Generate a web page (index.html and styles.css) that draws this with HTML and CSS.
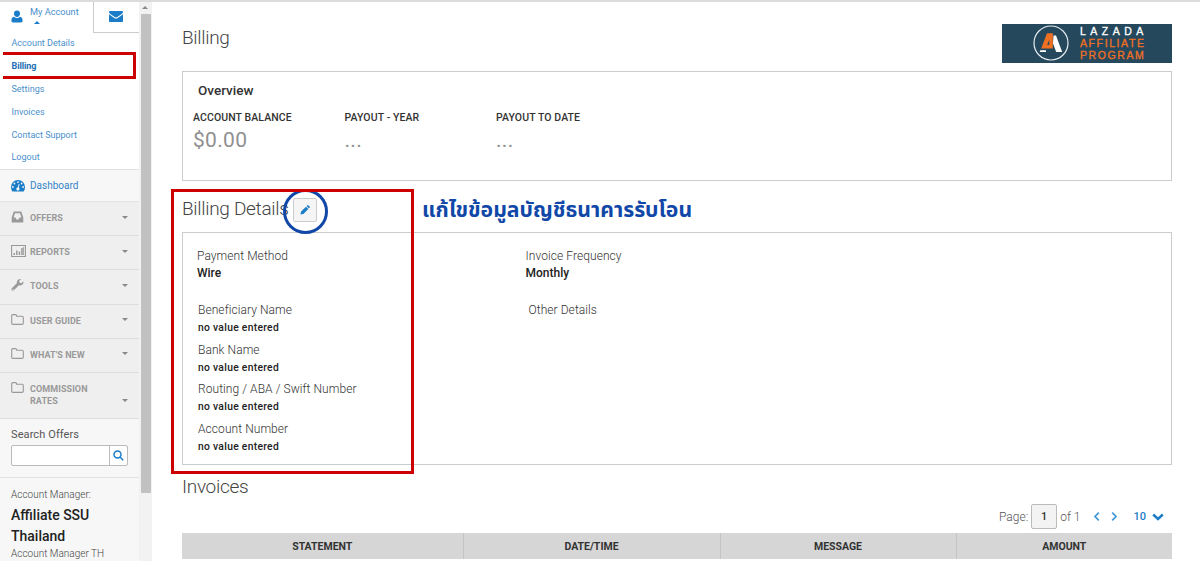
FILE: index.html
```html
<!DOCTYPE html>
<html lang="en">
<head>
    <meta charset="UTF-8">
    <meta name="viewport" content="width=device-width, initial-scale=1.0">
    <title>Billing</title>
    <link rel="stylesheet" href="styles.css">
</head>
<body>
    <div class="page">
        <div class="sidebar">
            <div class="account-tabs">
                <div class="account-tab">
                    <svg class="icon-user" viewBox="0 0 12 13"><path d="M6 0.5a3 3.3 0 0 1 3 3.3C9 5.700 7.700 7 6 7S3 5.700 3 3.800A3 3.300 0 0 1 6 .5zM3 6.800c.8.8 1.800 1.200 3 1.200s2.200-.4 3-1.200c1.800.3 2.600 2 2.600 4 0 1-.6 1.700-1.600 1.700H2c-1 0-1.600-.7-1.600-1.700 0-2 .8-3.700 2.600-4z"/></svg>
                    <div class="account-name">My Account<span class="caret-up"></span></div>
                </div>
                <div class="mail-tab">
                    <svg class="icon-mail" viewBox="0 0 14 11"><path d="M1 0h12c.6 0 1 .4 1 1 0 .8-.6 1.500-1.300 2L8.300 6c-.9.6-1.700.6-2.600 0L1.300 3C.6 2.500 0 1.800 0 1c0-.6.400-1 1-1zM0 3.300l5.200 3.600c1.300.9 2.300.9 3.600 0L14 3.300V10c0 .6-.4 1-1 1H1c-.6 0-1-.4-1-1z"/></svg>
                </div>
            </div>
            <div class="account-links">
                <a>Account Details</a>
                <a class="active">Billing</a>
                <a>Settings</a>
                <a>Invoices</a>
                <a>Contact Support</a>
                <a>Logout</a>
                <div class="mark-billing"></div>
            </div>
            <div class="dashboard">
                <svg class="icon-dash" viewBox="0 0 14 12"><path fill-rule="evenodd" d="M7 0a7 7 0 0 1 7 7c0 1.500-.4 3-1.100 4.200-.2.300-.4.400-.7.400H1.800c-.3 0-.5-.1-.7-.4A8 8 0 0 1 0 7a7 7 0 0 1 7-7zM7 1.200a.9.9 0 1 0 0 1.800.9.9 0 0 0 0-1.800zM3.400 2.600a.9.9 0 1 0 0 1.800.9.9 0 0 0 0-1.800zM10.600 2.600a.9.9 0 1 0 0 1.800.9.9 0 0 0 0-1.800zM1.900 6.100a.9.9 0 1 0 0 1.800.9.9 0 0 0 0-1.800zM12.100 6.100a.9.9 0 1 0 0 1.800.9.9 0 0 0 0-1.800zM7.700 4l-.9 3.500a1.500 1.500 0 1 0 1 .3l.8-3.500z"/></svg>
                <a>Dashboard</a>
            </div>
            <div class="nav">
                <div class="nav-item">
                    <svg class="nav-icon" viewBox="0 0 15 14"><path fill-rule="evenodd" d="M2.700 1.500h7.600L12.300 7.500v5H.7v-5zM4 3.200L2.600 7.600h1.900l.9 1.800h2.200l.9-1.800h1.900L9 3.200z"/></svg>
                    <span>OFFERS</span><i class="caret"></i>
                </div>
                <div class="nav-item">
                    <svg class="nav-icon" viewBox="0 0 15 14"><path class="line" d="M.6 1.500h13.800v11H.6z"/><path d="M2.500 9h1.500v2H2.500zM5.100 6.500h1.500V11H5.100zM7.700 7.500h1.500V11H7.700zM10.200 4h1.500v7h-1.500zM12.200 3h.8v8h-.8z"/></svg>
                    <span>REPORTS</span><i class="caret"></i>
                </div>
                <div class="nav-item">
                    <svg class="nav-icon" viewBox="0 0 15 14"><path d="M12.300 3.200L10.300 5.200 8.600 4.700 8.200 3 10.200 1C8.200.5 5.800 1.900 5.800 4.400v.9L.8 10.200c-1.400 1.500.6 3.500 2.100 2.100l5-5c3 .7 5.200-1.600 4.400-4.100zM2 11.900a.6.600 0 1 1 0-1.200.6.600 0 0 1 0 1.200z"/></svg>
                    <span>TOOLS</span><i class="caret"></i>
                </div>
                <div class="nav-item">
                    <svg class="nav-icon" viewBox="0 0 15 14"><path class="line" d="M.7 2.800c0-.8.400-1.200 1.200-1.200h2.500c.8 0 1.200.4 1.200 1.200v.4h5.500c.8 0 1.200.4 1.200 1.200v5.800c0 .8-.4 1.200-1.200 1.200H1.900c-.8 0-1.200-.4-1.200-1.200z"/></svg>
                    <span>USER GUIDE</span><i class="caret"></i>
                </div>
                <div class="nav-item">
                    <svg class="nav-icon" viewBox="0 0 15 14"><path class="line" d="M.7 2.800c0-.8.400-1.200 1.200-1.200h2.500c.8 0 1.200.4 1.200 1.200v.4h5.500c.8 0 1.200.4 1.200 1.200v5.800c0 .8-.4 1.200-1.200 1.200H1.900c-.8 0-1.200-.4-1.200-1.200z"/></svg>
                    <span>WHAT'S NEW</span><i class="caret"></i>
                </div>
                <div class="nav-item tall">
                    <svg class="nav-icon" viewBox="0 0 15 14"><path class="line" d="M.7 2.800c0-.8.400-1.200 1.200-1.200h2.500c.8 0 1.200.4 1.200 1.200v.4h5.500c.8 0 1.200.4 1.200 1.200v5.800c0 .8-.4 1.200-1.200 1.200H1.900c-.8 0-1.200-.4-1.200-1.200z"/></svg>
                    <span>COMMISSION<br>RATES</span><i class="caret"></i>
                </div>
            </div>
            <div class="search">
                <label for="searchInput">Search Offers</label>
                <div class="search-box">
                    <input type="text" id="searchInput">
                    <button><svg viewBox="0 0 11 11"><circle cx="4.500" cy="4.500" r="3.500"/><path d="M7.200 7.200l3 3"/></svg></button>
                </div>
            </div>
            <div class="manager">
                <p>Account Manager:</p>
                <h3>Affiliate SSU<br>Thailand</h3>
                <p>Account Manager TH</p>
            </div>
        </div>
        <div class="scrollbar">
            <span class="scroll-up"></span>
            <div class="scroll-thumb"></div>
        </div>
        <div class="main">
            <div class="main-head">
                <h1>Billing</h1>
                <div class="logo">
                    <svg viewBox="0 0 38 38"><circle cx="19" cy="19" r="17"/><path class="white" d="M21.500 11.500h2.500l6.200 16.500h-6L21 19.500zM8.300 26.200h5.700v1.800H7.700z"/><path class="orange" d="M15 9.300h5.800V24.500H9.200zM17.300 15.500L15.200 21h2.100z" fill-rule="evenodd"/></svg>
                    <div class="logo-text">
                        <span class="logo-name">LAZADA</span>
                        <span class="logo-affiliate">AFFILIATE</span>
                        <span class="logo-program">PROGRAM</span>
                    </div>
                </div>
            </div>
            <div class="panel overview">
                <h2>Overview</h2>
                <div class="stats">
                    <div><h4>ACCOUNT BALANCE</h4><p>$0.00</p></div>
                    <div><h4>PAYOUT - YEAR</h4><p>...</p></div>
                    <div><h4>PAYOUT TO DATE</h4><p>...</p></div>
                </div>
            </div>
            <div class="details-head">
                <h1>Billing Details</h1>
                <button class="edit-button"><svg viewBox="0 0 10 10"><path d="M.5 9.500l.6-2.900L6 1.700l2.300 2.300-4.900 4.900zM6.600 1.100l.7-.7c.4-.4.8-.4 1.200 0l1.100 1.100c.4.4.4.800 0 1.200l-.7.7z"/></svg></button>
                <span class="edit-note" lang="th">แก้ไขข้อมูลบัญชีธนาคารรับโอน</span>
                <div class="mark-edit"></div>
                <div class="mark-details"></div>
            </div>
            <div class="panel details">
                <div class="method">
                    <label>Payment Method</label>
                    <strong>Wire</strong>
                </div>
                <div class="method">
                    <label>Invoice Frequency</label>
                    <strong>Monthly</strong>
                </div>
                <div class="fields">
                    <label>Beneficiary Name</label>
                    <strong>no value entered</strong>
                    <label>Bank Name</label>
                    <strong>no value entered</strong>
                    <label>Routing / ABA / Swift Number</label>
                    <strong>no value entered</strong>
                    <label>Account Number</label>
                    <strong>no value entered</strong>
                </div>
                <div class="fields other">
                    <label>Other Details</label>
                </div>
            </div>
            <h1 class="invoices-title">Invoices</h1>
            <div class="pager">
                <span>Page:</span>
                <span class="page-input">1</span>
                <span class="page-total">of 1</span>
                <svg class="arrow prev" viewBox="0 0 7 9"><path d="M5.800 .7L2 4.500 5.800 8.300"/></svg>
                <svg class="arrow next" viewBox="0 0 7 9"><path d="M1.200 .7L5 4.500 1.200 8.300"/></svg>
                <span class="page-size">10</span>
                <svg class="size-arrow" viewBox="0 0 12 8"><path d="M1.200 1.500L6 6l4.800-4.500"/></svg>
            </div>
            <table>
                <tr>
                    <th class="col-statement">STATEMENT</th>
                    <th class="col-date">DATE/TIME</th>
                    <th class="col-message">MESSAGE</th>
                    <th class="col-amount">AMOUNT</th>
                </tr>
            </table>
        </div>
    </div>
</body>
</html>
```
FILE: styles.css
```css
* {
    box-sizing: border-box;
}
body {
    font-family: Roboto, sans-serif;
    margin: 0;
    color: #555;
    background-color: #fff;
}
h1, h2, h3, h4, p {
    margin: 0;
}
.page {
    display: flex;
    height: 561px;
    overflow: hidden;
    border-top: 2px solid #dcdcdc;
}

/* sidebar */
.sidebar {
    width: 139px;
    height: 561px;
    flex: none;
    background-color: #f7f7f7;
}
.account-tabs {
    display: flex;
    height: 31px;
    background-color: #fff;
}
.account-tab {
    display: flex;
    width: 93px;
    padding: 8px 0 0 11px;
}
.icon-user {
    width: 12px;
    height: 13px;
    fill: #1b7cc8;
}
.account-name {
    margin: -4px 0 0 7px;
    font-size: 9.200px;
    line-height: 12px;
    color: #4b8fcc;
    white-space: nowrap;
}
.caret-up {
    display: block;
    width: 0;
    margin: 3px 0 0 4px;
    border: 3px solid transparent;
    border-top: 0;
    border-bottom: 3px solid #1b7cc8;
}
.mail-tab {
    width: 46px;
    border-left: 1px solid #ccc;
    border-bottom: 1px solid #ccc;
    padding: 9px 0 0 15px;
}
.icon-mail {
    display: block;
    width: 14px;
    height: 11px;
    fill: #1b7cc8;
}
.account-links {
    position: relative;
    height: 137px;
    background-color: #fff;
    border-bottom: 1px solid #e2e2e2;
}
.account-links a {
    display: block;
    height: 22.900px;
    padding-left: 11.500px;
    font-size: 9px;
    line-height: 20.800px;
    color: #4b8fcc;
}
.account-links .active {
    color: #1b6eb5;
    font-weight: bold;
    letter-spacing: -0.100px;
}
.mark-billing {
    position: absolute;
    left: 3px;
    top: 19px;
    width: 133px;
    height: 27px;
    border: 3px solid #c00;
    border-left: 0;
}
.dashboard {
    display: flex;
    align-items: center;
    height: 32px;
    padding-left: 11px;
    border-bottom: 1px solid #e2e2e2;
    font-size: 10px;
    color: #3585c8;
}
.icon-dash {
    width: 14px;
    height: 12px;
    margin-right: 5px;
    fill: #1b7cc8;
}
.nav-item {
    display: flex;
    align-items: center;
    height: 34.200px;
    padding: 0 11px 1px;
    border-bottom: 1px solid #ddd;
    background-color: #efefef;
    color: #999;
    font-size: 9px;
    font-weight: bold;
    line-height: 12px;
    letter-spacing: 0.080px;
}
.nav-icon {
    width: 15px;
    height: 14px;
    margin: -2px 4px 0 0;
    fill: #999;
}
.nav-icon .line {
    fill: none;
    stroke: #999;
    stroke-width: 1.100;
}
.caret {
    margin: -2px 0 0 auto;
    border: 3px solid transparent;
    border-top: 3px solid #888;
    border-bottom: 0;
}
.tall {
    height: 46px;
    align-items: flex-start;
    padding-top: 10px;
}
.tall .caret {
    margin-top: 16px;
}
.search {
    height: 59px;
    padding: 9px 11px 0;
    border-bottom: 1px solid #e2e2e2;
}
.search label {
    display: block;
    font-size: 11px;
    line-height: 14px;
    margin-bottom: 3px;
    letter-spacing: 0.100px;
    color: #555;
}
.search-box {
    display: flex;
    width: 117px;
    height: 21px;
    border: 1px solid #bbb;
    border-radius: 2px;
    background-color: #fff;
}
.search-box input {
    width: 98px;
    padding: 0;
    border: 0;
    border-right: 1px solid #bbb;
    background-color: transparent;
}
.search-box button {
    display: flex;
    align-items: center;
    justify-content: center;
    width: 17px;
    padding: 0;
    border: 0;
    background-color: transparent;
}
.search-box svg {
    width: 11px;
    height: 11px;
    flex: none;
    fill: none;
    stroke: #1b7cc8;
    stroke-width: 1.500;
}
.manager {
    padding: 10px 0 0 11px;
}
.manager p {
    font-size: 10px;
    line-height: 14px;
    font-weight: 300;
    white-space: nowrap;
    color: #444;
}
.manager h3 {
    margin: 3px 0 0;
    font-size: 14px;
    line-height: 21px;
    font-weight: 500;
    color: #222;
}

/* sidebar scrollbar */
.scrollbar {
    width: 13px;
    height: 561px;
    flex: none;
    padding: 4px 1px 0 2px;
    background-color: #f2f2f2;
}
.scroll-up {
    display: block;
    width: 0;
    margin: 0 0 5px 1px;
    border: 3px solid transparent;
    border-top: 0;
    border-bottom: 3px solid #888;
}
.scroll-thumb {
    height: 479px;
    background-color: #c1c1c1;
}

/* main content */
.main {
    width: 990px;
    margin-left: 30px;
    flex: none;
}
.main h1 {
    font-size: 19px;
    line-height: 24px;
    font-weight: 300;
    letter-spacing: -0.300px;
    color: #444;
}
.main-head {
    display: flex;
    justify-content: space-between;
    height: 69px;
    padding-top: 22px;
}
.main-head h1 {
    margin-top: 2px;
}
.logo {
    display: flex;
    width: 170px;
    height: 39px;
    padding-left: 30px;
    background-color: #25485d;
}
.logo svg {
    width: 38px;
    height: 38px;
    fill: none;
    stroke: #e6ecef;
    stroke-width: 1.200;
}
.logo .white {
    fill: #fff;
    stroke: none;
}
.logo .orange {
    fill: #f07023;
    stroke: none;
}
.logo-text {
    padding: 1px 0 0 10px;
    font-family: "Liberation Sans", sans-serif;
    font-size: 10.500px;
    line-height: 12.200px;
    color: #f07023;
    -webkit-text-stroke: 0.300px currentColor;
}
.logo-text span {
    display: block;
}
.logo-name {
    color: #fff;
    letter-spacing: 4.500px;
}
.logo-affiliate {
    letter-spacing: 1.600px;
}
.logo-program {
    letter-spacing: 1.600px;
}
.panel {
    border: 1px solid #ccc;
    background-color: #fff;
}
.overview {
    height: 110px;
    padding: 9px 10px;
}
.overview h2 {
    margin-left: 5px;
    font-size: 13.500px;
    line-height: 18px;
    font-weight: 500;
    color: #333;
}
.stats {
    display: grid;
    grid-template-columns: 151.500px 151.500px 151.500px;
    margin-top: 12px;
}
.stats h4 {
    font-size: 10.500px;
    line-height: 14px;
    font-weight: 500;
    letter-spacing: 0.100px;
    color: #333;
}
.stats p {
    font-size: 21px;
    line-height: 31px;
    letter-spacing: 0.300px;
    color: #909090;
}
.details-head {
    position: relative;
    display: flex;
    align-items: center;
    height: 51px;
    padding-top: 5px;
}
.details-head h1 {
    width: 111px;
    white-space: nowrap;
}
.edit-button {
    display: flex;
    align-items: center;
    justify-content: center;
    width: 24px;
    height: 24px;
    margin: 2px 0 0 0;
    padding: 0;
    border: 1px solid #ccc;
    border-radius: 2px;
    background-color: #f5f5f5;
}
.edit-button svg {
    width: 10px;
    height: 10px;
    fill: #1b7cc8;
}
.edit-note {
    margin: 3px 0 0 105px;
    font-family: "Noto Sans Thai", "Noto Sans", sans-serif;
    font-size: 21.200px;
    line-height: 30px;
    font-weight: bold;
    white-space: nowrap;
    color: #1148a8;
}
.mark-edit {
    position: absolute;
    left: 101px;
    top: 8px;
    width: 45px;
    height: 45px;
    border: 3px solid #1148a8;
    border-radius: 50%;
}
.mark-details {
    position: absolute;
    left: -11px;
    top: 8px;
    width: 243px;
    height: 285px;
    border: 3px solid #c00;
}
.details {
    display: grid;
    grid-template-columns: 328.500px 1fr;
    grid-template-rows: 53px 1fr;
    height: 233px;
    padding: 15px 14px 0;
}
.details label, .details strong {
    display: block;
    font-size: 12px;
    line-height: 17px;
}
.details label {
    font-weight: 300;
    letter-spacing: 0.070px;
    color: #333;
}
.details strong {
    font-weight: 500;
    color: #222;
}
.fields {
    padding: 0 0 0 1px;
}
.details .fields label {
    line-height: 18px;
}
.details .fields strong {
    margin-bottom: 4.500px;
    font-size: 10.300px;
    line-height: 17px;
    letter-spacing: 0.300px;
}
.other {
    padding-left: 3px;
}
.main .invoices-title {
    margin-top: 10px;
}
.pager {
    display: flex;
    align-items: center;
    justify-content: flex-end;
    height: 25px;
    margin-top: 5px;
    padding-right: 8px;
    font-size: 12px;
    font-weight: 300;
}
.page-input {
    width: 26px;
    height: 25px;
    margin: 0 3px;
    border: 1px solid #bbb;
    border-radius: 2px;
    background-color: #f3f3f3;
    font-size: 11px;
    font-weight: 500;
    line-height: 23px;
    text-align: center;
    color: #333;
}
.arrow {
    width: 7px;
    height: 9px;
    fill: none;
    stroke: #3f97d6;
    stroke-width: 1.700;
}
.prev {
    margin-left: 13px;
}
.next {
    margin: 0 15px 0 11px;
}
.page-size {
    font-size: 11px;
    font-weight: 500;
    color: #1b7cc8;
}
.size-arrow {
    width: 12px;
    height: 8px;
    margin-left: 6px;
    fill: none;
    stroke: #1b7cc8;
    stroke-width: 2.400;
}
table {
    width: 990px;
    margin-top: 4px;
    border-collapse: collapse;
    table-layout: fixed;
}
th {
    height: 26px;
    padding: 0;
    background-color: #d6d6d6;
    border-left: 1px solid #c4c4c4;
    font-size: 10.500px;
    font-weight: bold;
    color: #333;
}
.col-statement {
    width: 281px;
    border-left: 0;
}
.col-date {
    width: 257px;
}
.col-message {
    width: 236px;
}
```
